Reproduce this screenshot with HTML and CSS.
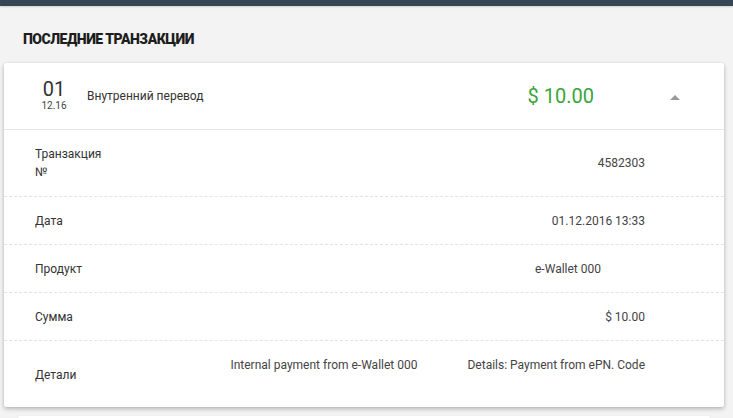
FILE: index.html
```html
<!DOCTYPE html>
<html lang="ru">
<head>
<meta charset="utf-8">
<title>Последние транзакции</title>
<link rel="stylesheet" href="styles.css">
</head>
<body>
<div class="topbar"></div>
<main class="section">
  <h2 class="title">ПОСЛЕДНИЕ ТРАНЗАКЦИИ</h2>
  <div class="card">
    <div class="head">
      <div class="date">
        <div class="day">01</div>
        <div class="month">12.16</div>
      </div>
      <div class="name">Внутренний перевод</div>
      <div class="amount">$ 10.00</div>
      <div class="caret"></div>
    </div>
    <div class="row first">
      <div class="label">Транзакция №</div>
      <div class="values"><span>4582303</span></div>
    </div>
    <div class="row">
      <div class="label">Дата</div>
      <div class="values"><span>01.12.2016 13:33</span></div>
    </div>
    <div class="row">
      <div class="label">Продукт</div>
      <div class="values"><span class="shifted">e-Wallet 000</span></div>
    </div>
    <div class="row">
      <div class="label">Сумма</div>
      <div class="values"><span>$ 10.00</span></div>
    </div>
    <div class="row details">
      <div class="label">Детали</div>
      <div class="values"><span>Internal payment from e-Wallet 000</span><span>Details: Payment from ePN. Code</span></div>
    </div>
  </div>
  <div class="card next"></div>
</main>
</body>
</html>
```
FILE: styles.css
```css
html, body {
  margin: 0;
  padding: 0;
  height: 100%;
  overflow: hidden;
}
body {
  background: #f3f3f3;
  font-family: Roboto, "Noto Sans", "Liberation Sans", sans-serif;
  color: #333;
}
.topbar {
  height: 6px;
  background: #364656;
  box-shadow: 0 1px 2px rgba(0,0,0,0.15);
}
.section {
  padding: 0 9px 0 4px;
}
.title {
  margin: 24px 0 15px 19px;
  font-size: 14px;
  line-height: 18px;
  font-weight: 900;
  letter-spacing: -0.5px;
  color: #1d1d1d;
}
.card {
  background: #fff;
  border-radius: 2px;
  box-shadow: 0 2px 4px rgba(0,0,0,0.25), 0 0 2px rgba(0,0,0,0.08);
}
.head {
  display: flex;
  align-items: center;
  height: 66px;
  border-bottom: 1px solid #e6e6e6;
  padding-left: 35px;
}
.date {
  width: 30px;
  text-align: center;
  margin-top: -2px;
}
.day {
  font-size: 20px;
  line-height: 21px;
  font-weight: 400;
  color: #333;
}
.month {
  font-size: 10px;
  line-height: 11px;
  color: #444;
}
.name {
  margin-left: 18px;
  font-size: 12px;
  flex: 1;
}
.amount {
  font-size: 20px;
  color: #3aa53a;
}
.caret {
  width: 0;
  height: 0;
  border-left: 5px solid transparent;
  border-right: 5px solid transparent;
  border-bottom: 5px solid #9a9a9a;
  margin: 2px 44px 0 76px;
}
.row {
  display: flex;
  align-items: center;
  padding: 15px 79px 14px 31px;
  border-bottom: 1px dashed #e3e3e3;
  font-size: 12px;
  line-height: 18px;
}
.row.first {
  padding-bottom: 15px;
}
.row:last-child {
  border-bottom: none;
}
.label {
  width: 72px;
  color: #333;
}
.values {
  flex: 1;
  display: flex;
  justify-content: flex-end;
  gap: 50px;
  color: #444;
}
.shifted {
  margin-right: 44px;
}
.details {
  align-items: flex-start;
  padding-bottom: 23px;
}
.details .label {
  margin-top: 10px;
}
.next {
  margin: 9px 14px 0;
  height: 40px;
  box-shadow: 0 0 1px rgba(0,0,0,0.15);
}
```
